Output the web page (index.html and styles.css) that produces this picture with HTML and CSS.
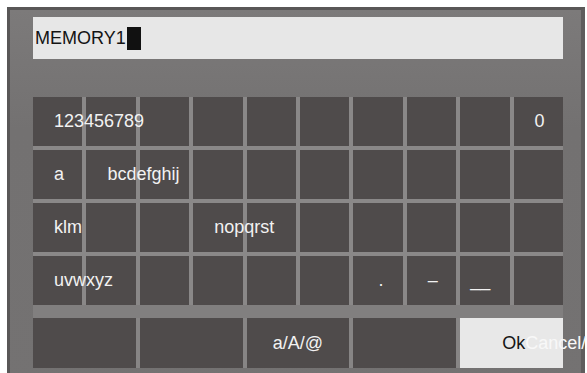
FILE: index.html
```html
<!DOCTYPE html>
<html>
<head>
<meta charset="utf-8">
<link rel="stylesheet" href="styles.css">
</head>
<body>
<div class="frame">
  <div class="input"><span class="value">MEMORY1</span><span class="cursor"></span></div>
  <div class="keyboard">
    <div class="keys">
      <div class="key"><span>123456789</span></div>
      <div class="key"></div><div class="key"></div><div class="key"></div><div class="key"></div>
      <div class="key"></div><div class="key"></div><div class="key"></div><div class="key"></div>
      <div class="key"><span>0</span></div>

      <div class="key"><span>a</span></div>
      <div class="key"><span>bcdefghij</span></div>
      <div class="key"></div><div class="key"></div><div class="key"></div><div class="key"></div>
      <div class="key"></div><div class="key"></div><div class="key"></div><div class="key"></div>

      <div class="key"><span>klm</span></div>
      <div class="key"></div><div class="key"></div>
      <div class="key"><span>nopqrst</span></div>
      <div class="key"></div><div class="key"></div><div class="key"></div><div class="key"></div>
      <div class="key"></div><div class="key"></div>

      <div class="key"><span>uvwxyz</span></div>
      <div class="key"></div><div class="key"></div><div class="key"></div><div class="key"></div>
      <div class="key"></div>
      <div class="key key-dot"><span>.</span></div>
      <div class="key"><span>–</span></div>
      <div class="key key-under"><span>__</span></div>
      <div class="key"></div>
    </div>
    <div class="actions">
      <div class="key"></div>
      <div class="key"></div>
      <div class="key key-center"><span>a/A/@</span></div>
      <div class="key"></div>
      <div class="key key-ok"><span class="ok">Ok</span><span class="cancel">Cancel/A</span></div>
    </div>
  </div>
</div>
</body>
</html>
```

FILE: styles.css
```css
html, body {
  margin: 0;
  padding: 0;
  overflow: hidden;
  background: #ffffff;
  width: 587px;
  height: 373px;
}

.frame {
  margin: 7px 0 0 7px;
  width: 578px;
  height: 400px;
  box-sizing: border-box;
  border-left: 3px solid #595757;
  border-top: 3px solid #595757;
  border-right: 4px solid #5f5d5d;
  background: linear-gradient(#7c7a7a, #737171 30%, #747272);
  padding: 7px 18px 0 23px;
  font-family: "Liberation Sans", Arial, sans-serif;
}

.input {
  height: 42px;
  background: #e7e7e7;
  display: flex;
  align-items: center;
  padding-left: 2px;
  font-size: 18px;
  color: #141414;
}

.cursor {
  width: 14px;
  height: 23px;
  background: #111111;
  margin-left: 1px;
}

.keyboard {
  margin-top: 38px;
  display: flex;
  flex-direction: column;
  gap: 13px;
  background: #817f7f;
}

.keys {
  display: grid;
  grid-template-columns: repeat(10, 1fr);
  grid-auto-rows: 49px;
  gap: 4px;
  background: #8a8888;
}

.actions {
  display: grid;
  grid-template-columns: repeat(5, 1fr);
  grid-auto-rows: 50px;
  gap: 4px;
  background: #878585;
}

.key {
  background: #4f4b4b;
  display: flex;
  align-items: center;
  padding-left: 21px;
  white-space: nowrap;
  font-size: 18px;
  color: #f2f2f2;
  min-width: 0;
}

.key span {
  position: relative;
  z-index: 1;
}

.key-dot {
  padding-left: 25px;
}

.key-under {
  padding-left: 10px;
}

.key-center {
  justify-content: center;
  padding-left: 0;
}

.key-ok {
  background: #e8e8e8;
  padding-left: 42px;
}

.ok {
  color: #151515;
}

.cancel {
  color: #f8f8f8;
}
```
